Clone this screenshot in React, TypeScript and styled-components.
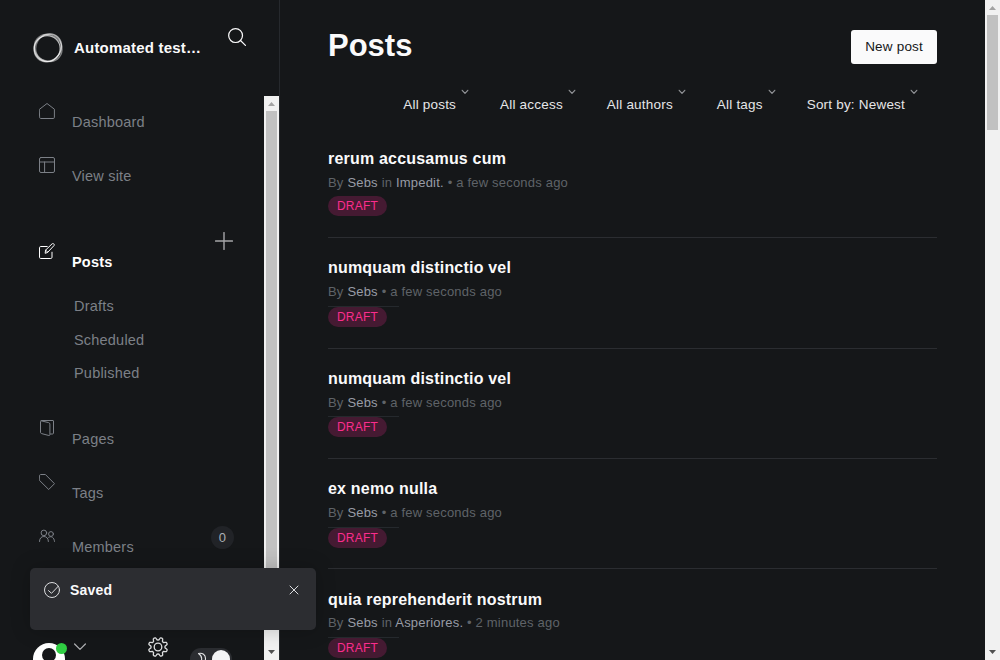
import React from 'react';
import styled, { createGlobalStyle, css } from 'styled-components';

const GlobalStyle = createGlobalStyle`
  * { box-sizing: border-box; }
  body {
    margin: 0;
    background: #151719;
    color: #fafafb;
    font-family: "Liberation Sans", Arial, sans-serif;
    font-size: 14.5px;
    letter-spacing: 0.2px;
    overflow: hidden;
  }
  h1, h2, h3, p { margin: 0; }
  svg { display: block; }
`;

const Page = styled.div`
  display: flex;
  width: 1000px;
  height: 660px;
  overflow: hidden;
  position: relative;
`;

const Sidebar = styled.aside`
  width: 280px;
  flex: none;
  height: 660px;
  display: flex;
  flex-direction: column;
  border-right: 1px solid #26292d;
`;

const SiteHeader = styled.header`
  height: 96px;
  flex: none;
  display: flex;
  align-items: flex-start;
  padding: 32px 32px 0 32px;
`;

const SiteName = styled.div`
  width: 164px;
  flex: none;
  padding-left: 10px;
  line-height: 32px;
  font-size: 15px;
  font-weight: 700;
  white-space: nowrap;
`;

const SearchButton = styled.div`
  margin-top: -4px;
`;

const SidebarBody = styled.div`
  display: flex;
  flex: 1;
  min-height: 0;
`;

const NavColumn = styled.nav`
  width: 264px;
  display: flex;
  flex-direction: column;
  overflow: hidden;
`;

const NavRow = styled.a<{ $active?: boolean; $gap?: number }>`
  display: flex;
  flex: none;
  align-items: flex-start;
  height: 54px;
  margin-top: ${(p) => p.$gap ?? 0}px;
  padding: 7px 30px 0 39px;
  color: ${(p) => (p.$active ? '#ffffff' : '#7c8087')};
  font-weight: ${(p) => (p.$active ? 700 : 400)};
`;

const NavLabel = styled.span`
  flex: 1;
  padding: 11px 0 0 17px;
  line-height: 16px;
`;

const AddButton = styled.span`
  margin: -11px 1px 0 0;
  color: #a5a6a8;
`;

const Count = styled.span`
  width: 23px;
  height: 23px;
  margin-top: -2px;
  border-radius: 50%;
  background: #212327;
  color: #abb0b6;
  font-size: 13px;
  line-height: 23px;
  text-align: center;
`;

const SubRow = styled.a`
  flex: none;
  height: 33.5px;
  padding-left: 74px;
  line-height: 33px;
  color: #7c8087;
`;

const Footer = styled.div`
  display: flex;
  flex: none;
  align-items: flex-start;
  margin-top: 61px;
  padding-left: 33px;
`;

const Avatar = styled.div`
  position: relative;
  width: 32px;
  height: 32px;
  margin-top: 7px;
`;

const OnlineDot = styled.span`
  position: absolute;
  top: 0;
  right: -2px;
  width: 11px;
  height: 11px;
  border-radius: 50%;
  background: #30cf43;
`;

const FooterChevron = styled.div`
  margin: 7px 0 0 9px;
`;

const Settings = styled.div`
  margin: 1px 0 0 62px;
  color: #dfe0e1;
`;

const ThemeSwitch = styled.div`
  display: flex;
  justify-content: space-between;
  width: 42px;
  height: 22px;
  margin: 12px 0 0 22px;
  padding: 2px 2px 0 6px;
  border-radius: 11px;
  background: #2b2d31;
`;

const Knob = styled.span`
  width: 18px;
  height: 18px;
  border-radius: 50%;
  background: #f4f5f6;
`;

const Track = styled.div`
  width: 15px;
  flex: none;
  height: 100%;
  display: flex;
  flex-direction: column;
  justify-content: space-between;
  background: #f1f1f1;
`;

const Thumb = styled.div<{ $height: number }>`
  height: ${(p) => p.$height}px;
  margin: 0 2px auto;
  background: #c1c1c1;
`;

const Main = styled.main`
  width: 705px;
  padding: 0 48px;
  overflow: hidden;
`;

const TitleBar = styled.div`
  display: flex;
  justify-content: space-between;
  height: 85px;
`;

const Heading = styled.h1`
  padding-top: 28px;
  font-size: 31px;
  line-height: 36px;
  letter-spacing: 0;
`;

const NewPost = styled.button`
  height: 34px;
  margin-top: 30px;
  padding: 0 14px 2px;
  border: 0;
  border-radius: 3px;
  background: #fafafb;
  color: #151719;
  font: 13.5px "Liberation Sans", Arial, sans-serif;
  letter-spacing: 0.2px;
`;

const Filters = styled.div`
  display: flex;
  justify-content: flex-end;
  gap: 12px;
  height: 43px;
`;

const Filter = styled.div`
  display: flex;
  padding-right: 19px;
  font-size: 13.5px;
  line-height: 16px;
  color: #e5e6e8;
  span { padding-top: 12px; }
  svg { margin: 4px 0 0 5px; }
`;

const PostRow = styled.article`
  border-bottom: 1px solid #2b2d31;
  padding: 20.1px 0 20.65px;
  &:first-of-type { padding: 21px 0 21.2px; }
`;

const PostTitle = styled.h3`
  font-size: 16px;
  line-height: 20px;
`;

const Meta = styled.p`
  margin-top: 4.8px;
  font-size: 13px;
  line-height: 18px;
  color: #5f6368;
  article:first-of-type & { margin-top: 5px; }
  b { font-weight: 400; color: #989ca6; }
`;

const StatusCell = styled.div<{ $line: boolean }>`
  width: 71px;
  margin-top: ${(p) => (p.$line ? 4.9 : 4)}px;
  ${(p) => p.$line && css`border-top: 1px solid #25292d;`}
`;

const Badge = styled.span`
  display: block;
  width: 59px;
  height: 20px;
  border-radius: 10px;
  background: #451a32;
  color: #fb2d8d;
  font-size: 12px;
  line-height: 20px;
  text-align: center;
`;

const Toast = styled.div`
  position: absolute;
  left: 30px;
  top: 568px;
  width: 286px;
  height: 62px;
  display: flex;
  align-items: flex-start;
  padding: 14px 17px 0 14px;
  border-radius: 5px;
  background: #2c2d31;
  box-shadow: 0 0 20px rgba(0, 0, 0, 0.22);
  font-size: 14px;
  font-weight: 700;
  line-height: 16px;
  p { flex: 1; padding-left: 10px; }
  svg { flex: none; color: #dcdddf; }
  svg:last-child { margin-top: 3px; }
`;

const line = { fill: 'none', stroke: 'currentColor', strokeLinecap: 'round', strokeLinejoin: 'round' } as const;

const Icon = ({ children, size = 16, box = 16, width = 1 }: { children: React.ReactNode; size?: number; box?: number; width?: number }) => (
  <svg width={size} height={size} viewBox={`0 0 ${box} ${box}`} strokeWidth={width} {...line}>{children}</svg>
);

const Logo = () => (
  <svg width="32" height="32" viewBox="0 0 32 32" fill="none" stroke="#fff">
    <circle cx="15.2" cy="16.6" r="13" strokeWidth="1.3" opacity=".7" />
    <ellipse cx="15.8" cy="16" rx="14.6" ry="12.8" transform="rotate(-48 15.8 16)" strokeWidth="1.3" opacity=".45" />
    <ellipse cx="16.6" cy="15.4" rx="12.6" ry="14" transform="rotate(30 16.600 15.4)" strokeWidth="1.5" opacity=".4" />
    <ellipse cx="16.2" cy="16" rx="14.4" ry="13" transform="rotate(40 16.2 16)" strokeWidth="1.3" opacity=".45" />
  </svg>
);

const HomeIcon = () => <Icon><path d="M.6 6.2 8 .5l7.4 5.7v8.1c0 .8-.4 1.2-1.2 1.2H1.8c-.8 0-1.2-.4-1.2-1.2z" /></Icon>;
const SiteIcon = () => <Icon><rect x=".5" y=".5" width="15" height="15" rx="1.5" /><path d="M.5 5h15M5.6 5v10.5" /></Icon>;
const EditIcon = () => (
  <Icon><path d="M8.2 3.5H1.7C1 3.5.5 4 .5 4.7v9.6c0 .7.5 1.2 1.2 1.2h10.1c.7 0 1.2-.5 1.2-1.2V9.2M6.2 9.9l.4-2.8L13 .9c.6-.5 1.3-.4 1.8 0s.7 1.2.1 1.8L8.8 9.2zM6.6 7.1l2.2 2.1" /></Icon>
);
const PagesIcon = () => (
  <Icon><path d="M3 .5h11c.3 0 .5.2.5.5v12c0 .6-.4 1-1 1h-2M2 .8l7.6 1.8c.8.2 1.3.7 1.3 1.5v10.5c0 .7-.4 1-1 .9l-7.3-1.9c-.7-.2-1.1-.6-1.1-1.3V2C1.5 1.1 2 .5 3 .5" /></Icon>
);
const TagIcon = () => <Icon><path d="M.5 1.7C.5 1 1 .5 1.7.5h4.7l9.1 9.2-5.8 5.8L.5 6.4z" /></Icon>;
const MembersIcon = () => (
  <Icon><circle cx="4.9" cy="4.9" r="2.8" /><circle cx="12" cy="6" r="2.4" /><path d="M.5 13.5c0-3 1.7-5 4.4-5s4.5 2 4.5 5M9.7 9.3c2.8-1.7 5.5.2 5.8 4.1" /></Icon>
);
const SearchIcon = () => <Icon size={18} box={19} width={1.3}><circle cx="8" cy="8" r="7.3" /><path d="m13.2 13.2 5.2 5.2" /></Icon>;
const PlusIcon = () => <Icon size={18} box={18} width={1.4}><path d="M9 .6v16.8M.6 9h16.8" /></Icon>;
const CheckIcon = () => <Icon><circle cx="8" cy="8" r="7.5" /><path d="m4.5 8.6 3 2.7 6.7-7" /></Icon>;
const CloseIcon = () => <Icon size={10} box={10}><path d="m1 1 8 8M9 1 1 9" /></Icon>;
const ChevronIcon = () => (
  <svg width="8" height="6" viewBox="0 0 8 6" strokeWidth="1.2" {...line} stroke="#919397"><path d="m1.2 1.3 2.8 3 2.8-3" /></svg>
);

// Eight-toothed outline, sampled around a circle with a flattened cosine wave.
const gearPath = (() => {
  const points: string[] = [];
  for (let i = 0; i <= 96; i += 1) {
    const angle = (i / 96) * Math.PI * 2;
    const radius = 8.3 + 1.35 * Math.tanh(Math.cos(angle * 8) * 2.2);
    const turned = angle + Math.PI / 8;
    points.push(`${(10 + radius * Math.sin(turned)).toFixed(2)} ${(10 - radius * Math.cos(turned)).toFixed(2)}`);
  }
  return `M${points.join('L')}Z`;
})();
const GearIcon = () => <Icon size={20} box={20} width={1.3}><path d={gearPath} /><circle cx="10" cy="10" r="3.8" /></Icon>;

const Scrollbar = ({ thumb }: { thumb: number }) => (
  <Track>
    <svg width="15" height="15" viewBox="0 0 15 15" fill="#a3a3a3"><path d="M4 10h7L7.5 6z" /></svg>
    <Thumb $height={thumb} />
    <svg width="15" height="15" viewBox="0 0 15 15" fill="#505050"><path d="M4 5h7L7.5 9z" /></svg>
  </Track>
);

const filters = ['All posts', 'All access', 'All authors', 'All tags', 'Sort by: Newest'];

const posts = [
  { title: 'rerum accusamus cum', tag: 'Impedit.', time: 'a few seconds ago' },
  { title: 'numquam distinctio vel', time: 'a few seconds ago' },
  { title: 'numquam distinctio vel', time: 'a few seconds ago' },
  { title: 'ex nemo nulla', time: 'a few seconds ago' },
  { title: 'quia reprehenderit nostrum', tag: 'Asperiores.', time: '2 minutes ago' },
];

export default function App() {
  return (
    <Page>
      <GlobalStyle />
      <Sidebar>
        <SiteHeader>
          <Logo />
          <SiteName>Automated test…</SiteName>
          <SearchButton><SearchIcon /></SearchButton>
        </SiteHeader>
        <SidebarBody>
          <NavColumn>
            <NavRow><HomeIcon /><NavLabel>Dashboard</NavLabel></NavRow>
            <NavRow><SiteIcon /><NavLabel>View site</NavLabel></NavRow>
            <NavRow $active $gap={32}><EditIcon /><NavLabel>Posts</NavLabel><AddButton><PlusIcon /></AddButton></NavRow>
            <SubRow>Drafts</SubRow>
            <SubRow>Scheduled</SubRow>
            <SubRow>Published</SubRow>
            <NavRow $gap={22.5}><PagesIcon /><NavLabel>Pages</NavLabel></NavRow>
            <NavRow><TagIcon /><NavLabel>Tags</NavLabel></NavRow>
            <NavRow><MembersIcon /><NavLabel>Members</NavLabel><Count>0</Count></NavRow>
            <Footer>
              <Avatar>
                <svg width="32" height="32" viewBox="0 0 32 32"><circle cx="16" cy="16" r="16" fill="#fff" /><circle cx="16" cy="12" r="7" fill="#151719" /></svg>
                <OnlineDot />
              </Avatar>
              <FooterChevron>
                <svg width="12" height="8" viewBox="0 0 12 8" strokeWidth="1.2" {...line} stroke="#b0b2b5"><path d="M.6 1 6 6.4 11.4 1" /></svg>
              </FooterChevron>
              <Settings><GearIcon /></Settings>
              <ThemeSwitch>
                <svg width="12" height="16" viewBox="0 0 12 16" strokeWidth="1.1" {...line} stroke="#e5e6e8"><path d="M2.5 3.5c4-.8 7 1.2 7 5s-3 6-7 5c4-2 4.5-7 0-10" /></svg>
                <Knob />
              </ThemeSwitch>
            </Footer>
          </NavColumn>
          <Scrollbar thumb={500} />
        </SidebarBody>
      </Sidebar>
      <Main>
        <TitleBar>
          <Heading>Posts</Heading>
          <NewPost>New post</NewPost>
        </TitleBar>
        <Filters>
          {filters.map((name) => <Filter key={name}><span>{name}</span><ChevronIcon /></Filter>)}
        </Filters>
        {posts.map((post, i) => (
          <PostRow key={i}>
            <PostTitle>{post.title}</PostTitle>
            <Meta>By <b>Sebs</b>{post.tag && <> in <b>{post.tag}</b></>} • {post.time}</Meta>
            <StatusCell $line={i > 0}><Badge>DRAFT</Badge></StatusCell>
          </PostRow>
        ))}
      </Main>
      <Scrollbar thumb={115} />
      <Toast><CheckIcon /><p>Saved</p><CloseIcon /></Toast>
    </Page>
  );
}
